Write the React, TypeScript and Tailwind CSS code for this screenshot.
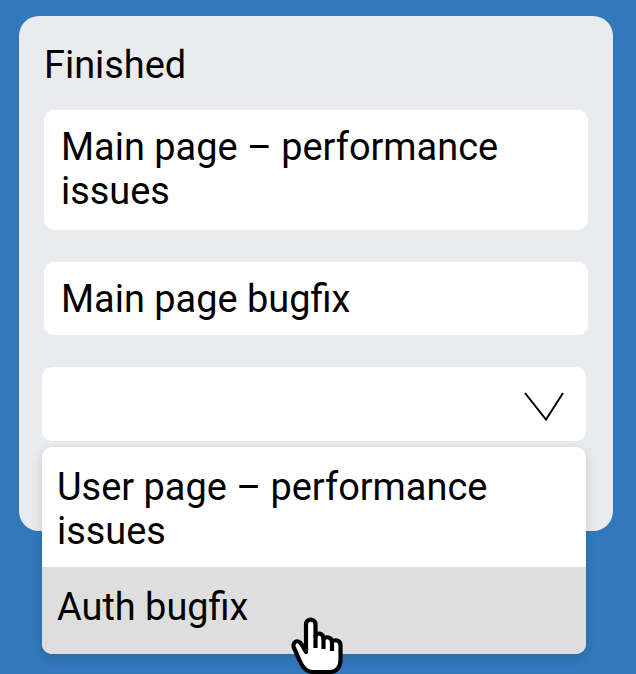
export default function App() {
  return (
    <main className="relative h-[674px] w-[636px] overflow-hidden bg-[#3279bb] px-[18.7px] pt-[16.4px] font-['Roboto',sans-serif] text-[37.92px] leading-[44px] text-black">
      <section className="h-[514.6px] w-[594.6px] rounded-[20px] bg-[#eaebef] px-[25.3px] pt-[26.6px]">
        <h1>Finished</h1>
        <div className="mt-[22.7px] h-[120px] w-[544px] rounded-[10px] bg-white px-[17px] pt-[15.6px]">Main page – performance<br />issues</div>
        <div className="mt-8 h-[73.3px] w-[544px] rounded-[10px] bg-white px-[17px] pt-[15.3px]">Main page bugfix</div>
        <div className="-ml-[2px] mt-[31.7px] flex h-[74px] w-[544px] items-center justify-end rounded-[10px] bg-white pr-[22px]">
          <svg className="mt-1" width="40" height="30" viewBox="0 0 40 30" fill="none" stroke="black" strokeWidth="2"><path d="M1 2 22 28.5 39 2" /></svg>
        </div>
      </section>
      <div className="absolute left-[42px] top-[447px] h-[206.7px] w-[544px] overflow-hidden rounded-[10px] bg-white shadow-[0_4px_12px_rgba(0,0,0,0.15)]">
        <div className="h-[120px] px-[15px] pt-[18px]">User page – performance<br />issues</div>
        <div className="h-[87px] bg-[#dedede] px-[15px] pt-[18px]">Auth bugfix</div>
      </div>
      <svg className="absolute left-[290px] top-[616px]" width="56" height="60" viewBox="0 0 56 60" fill="white" stroke="black" strokeWidth="4.2" strokeLinejoin="round">
        <path d="M16 36V8.5c0-6.5 9.5-6.5 9.5 0V20c2-4 8-3 8 3 2-3 8.5-2 8.5 3 2-3 8.5-2 8.5 3v15c0 7-4 12-10 12H23C12 56 10 44 4.5 33 1 26 8 22 12 29l4 7Z" />
        <path d="M25.5 19v13M33.5 22v11M42 25v10" />
      </svg>
    </main>
  );
}
